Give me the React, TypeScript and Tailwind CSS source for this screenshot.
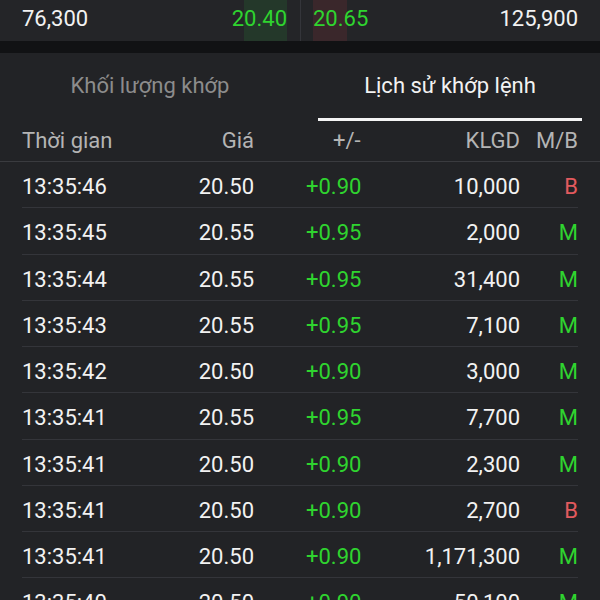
const rows: [string, string, string, string, "M" | "B"][] = [
  ["13:35:46", "20.50", "+0.90", "10,000", "B"],
  ["13:35:45", "20.55", "+0.95", "2,000", "M"],
  ["13:35:44", "20.55", "+0.95", "31,400", "M"],
  ["13:35:43", "20.55", "+0.95", "7,100", "M"],
  ["13:35:42", "20.50", "+0.90", "3,000", "M"],
  ["13:35:41", "20.55", "+0.95", "7,700", "M"],
  ["13:35:41", "20.50", "+0.90", "2,300", "M"],
  ["13:35:41", "20.50", "+0.90", "2,700", "B"],
  ["13:35:41", "20.50", "+0.90", "1,171,300", "M"],
  ["13:35:40", "20.50", "+0.90", "50,100", "M"],
];

export default function App() {
  return (
    <div
      className="h-[600px] w-[600px] overflow-hidden bg-[#222326] text-[22px] text-[#f2f2f2]"
      style={{ fontFamily: "Roboto, 'Noto Sans', sans-serif" }}
    >
      {/* Order book last row */}
      <div className="flex h-[41px] bg-[#242528]">
        <div className="flex w-[300px] items-center justify-between pb-[4px] pl-[22px] pr-[13px]">
          <span>76,300</span>
          <span className="relative text-[#2fd42f]">
            <span className="absolute -top-[6px] bottom-[-6px] left-[12px] right-0 bg-[#24382a]" />
            <span className="relative">20.40</span>
          </span>
        </div>
        <div className="w-px bg-[#34353a]" />
        <div className="flex flex-1 items-center justify-between pb-[4px] pl-[12px] pr-[22px]">
          <span className="relative text-[#2fd42f]">
            <span className="absolute -top-[6px] bottom-[-6px] left-0 w-[34px] bg-[#3a272b]" />
            <span className="relative">20.65</span>
          </span>
          <span>125,900</span>
        </div>
      </div>
      <div className="h-[12px] bg-[#111214]" />

      {/* Tabs */}
      <div className="flex h-[68px]">
        <div className="flex w-[300px] items-start justify-center pt-[16px] text-[#8c8c8c]">
          Khối lượng khớp
        </div>
        <div className="ml-[18px] flex w-[264px] flex-col items-center justify-between pt-[16px]">
          <span>Lịch sử khớp lệnh</span>
          <div className="h-[3px] w-full bg-[#f4f4f4]" />
        </div>
      </div>

      {/* Header */}
      <div className="grid h-[41px] grid-cols-[130px_102px_166px_100px_58px] items-center border-b border-[#3a3b3f] px-[22px] pb-[2px] text-[#b4b4b4]">
        <span>Thời gian</span>
        <span className="text-right">Giá</span>
        <span className="pl-[79px]">+/-</span>
        <span className="text-right">KLGD</span>
        <span className="text-right">M/B</span>
      </div>

      {/* Match history */}
      <div className="px-[22px]">
        {rows.map((r, i) => (
          <div
            key={i}
            className="grid h-[46.25px] grid-cols-[130px_102px_166px_100px_58px] items-center border-b border-[#34353a] pt-[4px]"
          >
            <span>{r[0]}</span>
            <span className="text-right">{r[1]}</span>
            <span className="pl-[52px] text-[#2fd42f]">{r[2]}</span>
            <span className="text-right">{r[3]}</span>
            <span className={r[4] === "B" ? "text-right text-[#e25a5e]" : "text-right text-[#2fd42f]"}>
              {r[4]}
            </span>
          </div>
        ))}
      </div>
    </div>
  );
}
